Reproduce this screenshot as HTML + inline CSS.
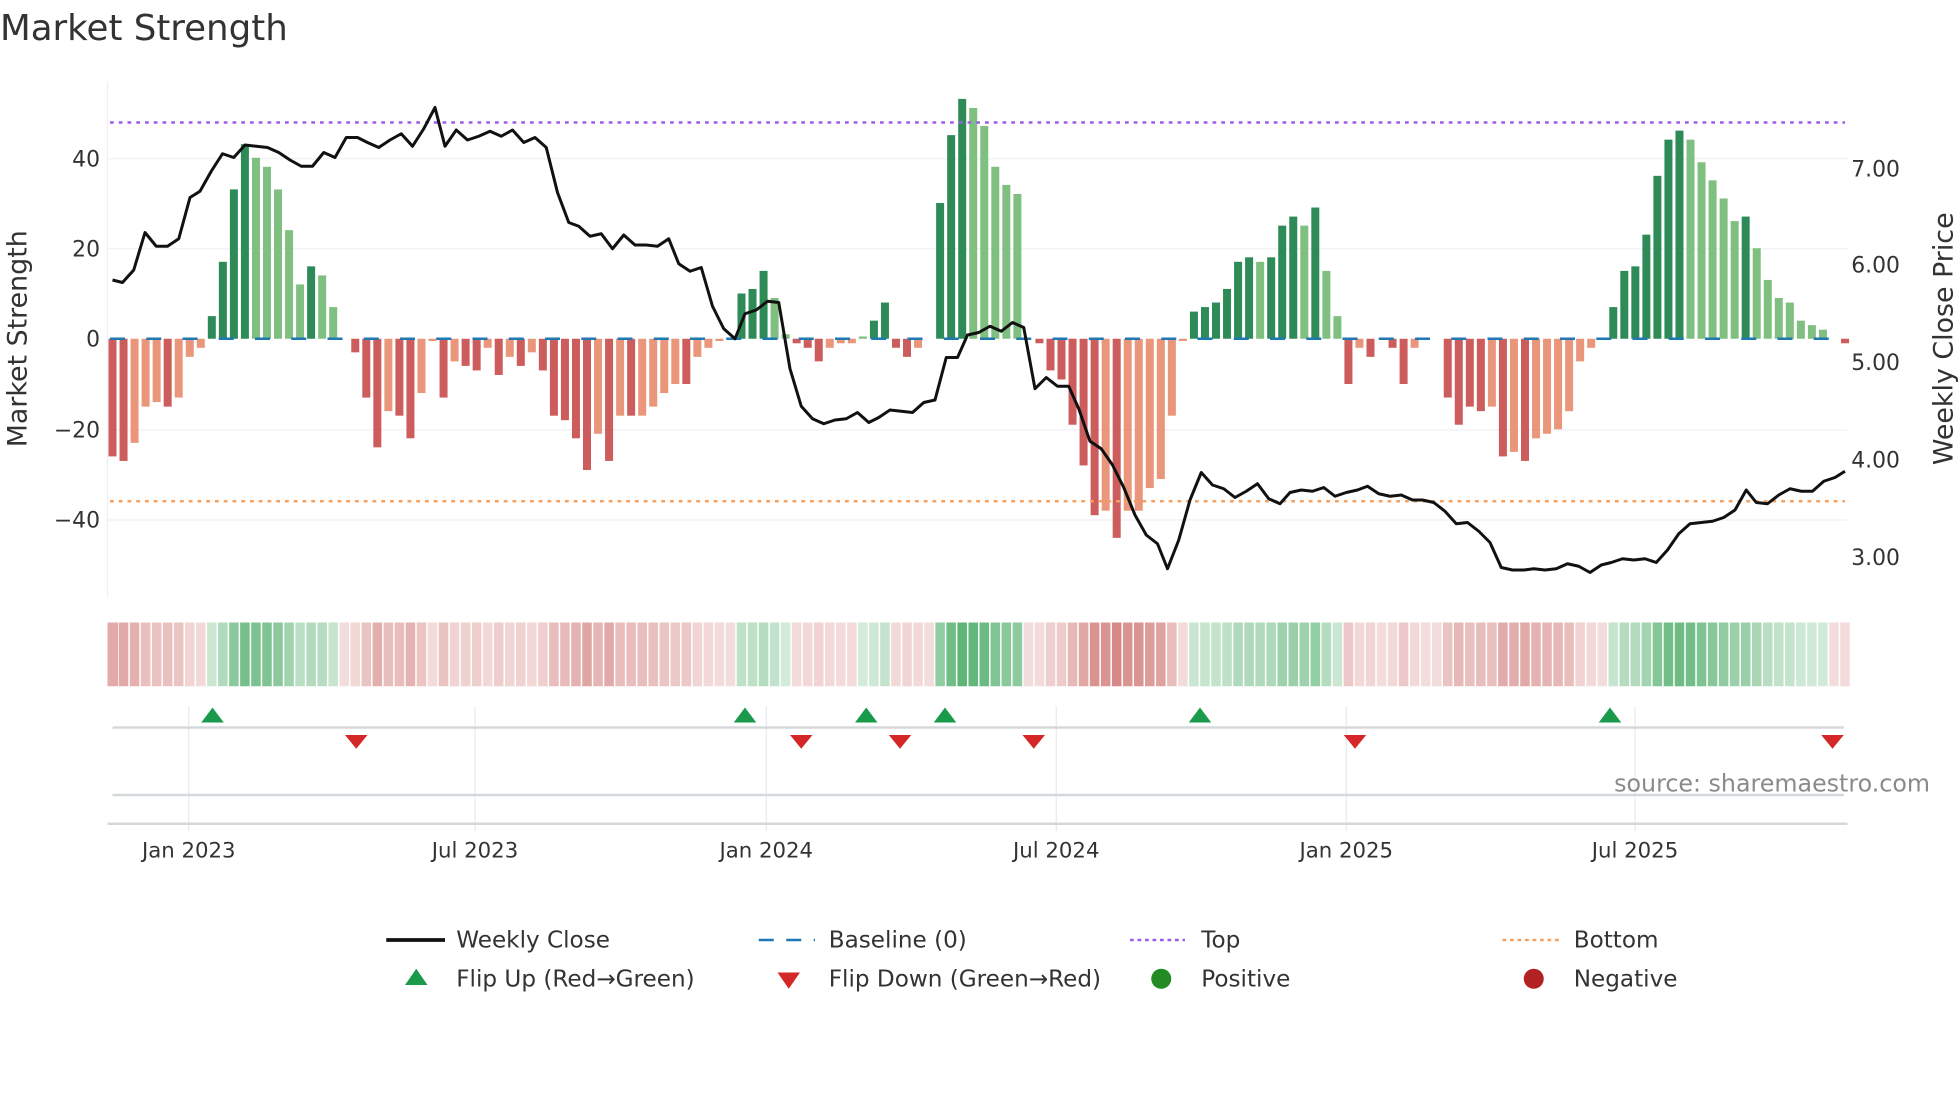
<!DOCTYPE html>
<html><head><meta charset="utf-8"><style>
html,body{margin:0;padding:0;background:#fff;}
svg{display:block;font-family:"DejaVu Sans","Liberation Sans",sans-serif;}
</style></head><body>
<svg id="s" width="1960" height="1102" viewBox="0 0 1568 881.6" xmlns="http://www.w3.org/2000/svg">
<rect width="1568" height="881.6" fill="#fff"/>
<text x="0" y="32" font-size="28.5" fill="#333">Market Strength</text>
<g stroke="#eef0f5" stroke-width="1">
<line x1="86" x2="1478" y1="127" y2="127"/><line x1="86" x2="1478" y1="199" y2="199"/>
<line x1="86" x2="1478" y1="344" y2="344"/><line x1="86" x2="1478" y1="416" y2="416"/>
<line x1="86" x2="86" y1="65" y2="478"/>
</g>
<g font-size="17.5" fill="#333" text-anchor="end">
<text x="80" y="133">40</text><text x="80" y="205">20</text><text x="80" y="277">0</text>
<text x="80" y="350">−20</text><text x="80" y="422">−40</text>
</g>
<g font-size="17.5" fill="#333">
<text x="1481" y="141">7.00</text><text x="1481" y="218">6.00</text><text x="1481" y="296">5.00</text>
<text x="1481" y="374">4.00</text><text x="1481" y="452">3.00</text>
</g>
<text transform="translate(21,271) rotate(-90)" font-size="21.5" fill="#333" text-anchor="middle">Market Strength</text>
<text transform="translate(1562,271) rotate(-90)" font-size="21.5" fill="#333" text-anchor="middle">Weekly Close Price</text>
<g id="bars"></g>
<line x1="88" x2="1476" y1="271" y2="271" stroke="#1f77b4" stroke-width="2" stroke-dasharray="12,17"/>
<line x1="88" x2="1476" y1="98" y2="98" stroke="#9b5de5" stroke-width="2" stroke-dasharray="3,4"/>
<line x1="88" x2="1476" y1="401" y2="401" stroke="#f4a261" stroke-width="2" stroke-dasharray="3,4"/>
<path id="price" fill="none" stroke="#111" stroke-width="2.4" stroke-linejoin="round"/>
<g id="strip"></g>
<g stroke="#e6eaef" stroke-width="1">
<line x1="151" x2="151" y1="565" y2="665"/><line x1="380" x2="380" y1="565" y2="665"/>
<line x1="613" x2="613" y1="565" y2="665"/><line x1="845" x2="845" y1="565" y2="665"/>
<line x1="1077" x2="1077" y1="565" y2="665"/><line x1="1308" x2="1308" y1="565" y2="665"/>
</g>
<line x1="90" x2="1475" y1="582" y2="582" stroke="#d5d8db" stroke-width="2"/>
<line x1="90" x2="1475" y1="636" y2="636" stroke="#d5d8db" stroke-width="2"/>
<line x1="86" x2="1478" y1="659" y2="659" stroke="#d5d8db" stroke-width="2"/>
<g id="tri"></g>
<text x="1544" y="633" font-size="19" fill="#8a8a8a" text-anchor="end">source: sharemaestro.com</text>
<g font-size="17" fill="#333" text-anchor="middle">
<text x="151" y="686">Jan 2023</text><text x="380" y="686">Jul 2023</text><text x="613" y="686">Jan 2024</text>
<text x="845" y="686">Jul 2024</text><text x="1077" y="686">Jan 2025</text><text x="1308" y="686">Jul 2025</text>
</g>
<g font-size="18.5" fill="#333">
<line x1="309" x2="356" y1="752" y2="752" stroke="#111" stroke-width="3"/>
<text x="365" y="758">Weekly Close</text>
<line x1="607" x2="652" y1="752" y2="752" stroke="#1f77b4" stroke-width="2" stroke-dasharray="12,10"/>
<text x="663" y="758">Baseline (0)</text>
<line x1="904" x2="948" y1="752" y2="752" stroke="#9b5de5" stroke-width="2" stroke-dasharray="3,3"/>
<text x="961" y="758">Top</text>
<line x1="1202" x2="1247" y1="752" y2="752" stroke="#f4a261" stroke-width="2" stroke-dasharray="3,3"/>
<text x="1259" y="758">Bottom</text>
<polygon points="324,788 342,788 333,775" fill="#1a9a4a"/>
<text x="365" y="789">Flip Up (Red→Green)</text>
<polygon points="622,778 640,778 631,791" fill="#d62728"/>
<text x="663" y="789">Flip Down (Green→Red)</text>
<circle cx="929" cy="783" r="8" fill="#228b22"/>
<text x="961" y="789">Positive</text>
<circle cx="1227" cy="783" r="8" fill="#b22222"/>
<text x="1259" y="789">Negative</text>
</g>
</svg>
<script>
var NS="http://www.w3.org/2000/svg";
var B=[[-26,1],[-27,1],[-23,0],[-15,0],[-14,0],[-15,1],[-13,0],[-4,0],[-2,0],[5,1],[17,1],[33,1],[43,1],[40,0],[38,0],[33,0],[24,0],[12,0],[16,1],[14,0],[7,0],[0,0],[-3,1],[-13,1],[-24,1],[-16,0],[-17,1],[-22,1],[-12,0],[-0.5,0],[-13,1],[-5,0],[-6,1],[-7,1],[-2,0],[-8,1],[-4,0],[-6,1],[-3,0],[-7,1],[-17,1],[-18,1],[-22,1],[-29,1],[-21,0],[-27,1],[-17,0],[-17,1],[-17,0],[-15,0],[-12,0],[-10,0],[-10,1],[-4,0],[-2,0],[-0.5,0],[0,0],[10,1],[11,1],[15,1],[9,0],[1,0],[-1,1],[-2,1],[-5,1],[-2,0],[-1,0],[-1,0],[0.5,0],[4,1],[8,1],[-2,1],[-4,1],[-2,0],[0,0],[30,1],[45,1],[53,1],[51,0],[47,0],[38,0],[34,0],[32,0],[0,0],[-1,1],[-7,1],[-9,1],[-19,1],[-28,1],[-39,1],[-38,0],[-44,1],[-38,0],[-38,0],[-33,0],[-31,0],[-17,0],[-0.5,0],[6,1],[7,1],[8,1],[11,1],[17,1],[18,1],[17,0],[18,1],[25,1],[27,1],[25,0],[29,1],[15,0],[5,0],[-10,1],[-2,0],[-4,1],[0,0],[-2,1],[-10,1],[-2,0],[0,0],[0,0],[-13,1],[-19,1],[-15,1],[-16,1],[-15,0],[-26,1],[-25,0],[-27,1],[-22,0],[-21,0],[-20,0],[-16,0],[-5,0],[-2,0],[0,0],[7,1],[15,1],[16,1],[23,1],[36,1],[44,1],[46,1],[44,0],[39,0],[35,0],[31,0],[26,0],[27,1],[20,0],[13,0],[9,0],[8,0],[4,0],[3,0],[2,0],[0,0],[-1,1]];
var n=B.length, x0=90, dx=(1476-90)/(n-1);
var g=document.getElementById("bars"), st=document.getElementById("strip");
for(var i=0;i<n;i++){
 var v=B[i][0],d=B[i][1],x=x0+i*dx;
 if(v!==0){var r=document.createElementNS(NS,"rect");var h=Math.abs(v)*3.62;
 r.setAttribute("x",x-3.2);r.setAttribute("width",6.4);
 r.setAttribute("y",v>0?271-h:271);r.setAttribute("height",h);
 r.setAttribute("fill",v>0?(d?"#2e8b57":"#7fbf7f"):(d?"#cd5c5c":"#e9967a"));g.appendChild(r);}
 var s=document.createElementNS(NS,"rect");
 var w=(i==0)?x+dx/2-86:dx-1.2; var sx=(i==0)?86:x-dx/2+0.6;
 s.setAttribute("x",sx);s.setAttribute("width",w);s.setAttribute("y",498);s.setAttribute("height",51);
 var a=Math.min(1,0.25+Math.abs(v)/55*0.75);
 s.setAttribute("fill",v>=0.5?"#3da55a":"#c65c58");s.setAttribute("fill-opacity",a*0.85);st.appendChild(s);
}
var P=[[90,224],[98,226],[107,216],[116,186],[125,197],[134,197],[143,191],[152,158],[160,153],[169,137],[178,123],[187,126],[196,116],[205,117],[214,118],[223,122],[232,128],[241,133],[250,133],[259,122],[268,126],[277,110],[286,110],[294,114],[303,118],[312,112],[321,107],[330,117],[339,103],[348,86],[356,117],[365,104],[374,112],[383,109],[392,105],[401,109],[410,104],[419,114],[428,110],[437,118],[446,154],[455,178],[463,181],[472,189],[481,187],[490,199],[499,188],[508,196],[517,196],[526,197],[535,191],[543,211],[552,217],[561,214],[570,245],[579,263],[588,271],[596,251],[605,248],[614,241],[623,242],[632,295],[641,325],[650,335],[659,339],[668,336],[677,335],[686,330],[695,338],[703,334],[712,328],[721,329],[730,330],[739,322],[748,320],[757,286],[766,286],[774,268],[783,266],[792,261],[801,265],[810,258],[819,262],[828,311],[837,302],[846,309],[855,309],[863,327],[872,353],[881,359],[890,372],[899,390],[908,412],[917,428],[926,435],[934,455],[943,432],[952,400],[961,378],[970,388],[979,391],[988,398],[997,393],[1006,387],[1015,399],[1024,403],[1032,394],[1041,392],[1050,393],[1059,390],[1068,397],[1077,394],[1086,392],[1094,389],[1103,395],[1112,397],[1121,396],[1130,400],[1138,400],[1147,402],[1156,409],[1165,419],[1174,418],[1183,425],[1192,434],[1201,454],[1210,456],[1219,456],[1227,455],[1236,456],[1245,455],[1254,451],[1263,453],[1272,458],[1281,452],[1289,450],[1298,447],[1307,448],[1316,447],[1325,450],[1334,440],[1343,427],[1352,419],[1361,418],[1370,417],[1379,414],[1388,408],[1397,392],[1405,402],[1414,403],[1423,396],[1432,391],[1441,393],[1450,393],[1459,385],[1468,382],[1476,377]];
document.getElementById("price").setAttribute("d","M"+P.map(function(p){return p[0]+","+p[1]}).join(" L"));
var t=document.getElementById("tri"),h="";
[170,596,693,756,960,1288].forEach(function(x){h+='<polygon points="'+(x-9)+',578 '+(x+9)+',578 '+x+',566" fill="#1a9a4a"/>';});
[285,641,720,827,1084,1466].forEach(function(x){h+='<polygon points="'+(x-9)+',588 '+(x+9)+',588 '+x+',599" fill="#d62728"/>';});
t.innerHTML=h;
</script>
</body></html>
